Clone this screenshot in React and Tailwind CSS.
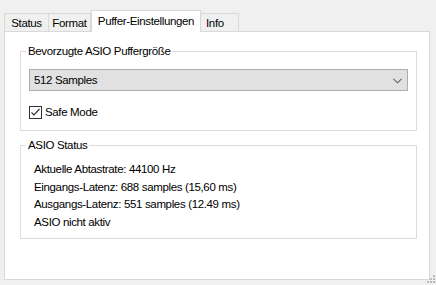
import React from "react";

const font = { fontFamily: '"Liberation Sans", Arial, sans-serif' };

export default function App() {
  return (
    <div
      className="relative h-[285px] w-[436px] overflow-hidden bg-[#f0f0f0] text-[11.5px] leading-[15px] tracking-[-0.35px] text-black"
      style={font}
    >
      <div className="flex flex-col pl-[4px] pr-[6px] pt-[10px]">
        <div className="flex h-[21px] items-end">
          <div className="flex h-[18px] w-[45px] items-start justify-center border border-b-0 border-[#d9d9d9] pt-[2px]">Status</div>
          <div className="flex h-[18px] w-[42px] items-start justify-center border border-b-0 border-l-0 border-[#d9d9d9] pt-[2px]">Format</div>
          <div className="relative z-10 -mb-px flex h-[22px] w-[110px] items-start justify-center border border-b-0 border-[#d9d9d9] bg-white pt-[3px]">Puffer-Einstellungen</div>
          <div className="flex h-[18px] w-[38px] items-start border border-b-0 border-l-0 border-[#d9d9d9] pl-[5px] pt-[2px]">Info</div>
        </div>
        <div className="flex h-[249px] flex-col border border-[#d9d9d9] bg-white pl-[15px] pr-[12px] pt-[12px]">
          <fieldset className="h-[87px] border border-[#dcdcdc] px-[8px] pt-[10px]">
            <legend className="-ml-[3px] px-[2px] leading-[15px]">Bevorzugte ASIO Puffergröße</legend>
            <div className="flex h-[22px] items-center justify-between border border-[#adadad] bg-[#e1e1e1] pl-[4px] pr-[5px]">
              <span>512 Samples</span>
              <svg width="9" height="6" viewBox="0 0 9 6" className="mt-[1px]">
                <path d="M0.5 0.8 L4.5 4.8 L8.5 0.8" fill="none" stroke="#606060" strokeWidth="1.1" />
              </svg>
            </div>
            <label className="mt-[14px] flex items-center gap-[3px]">
              <span className="flex h-[13px] w-[13px] items-center justify-center border border-[#333333] bg-white">
                <svg width="11" height="11" viewBox="0 0 11 11">
                  <path d="M1.5 5.5 L4 8 L9.5 2" fill="none" stroke="#333333" strokeWidth="1.2" />
                </svg>
              </span>
              <span>Safe Mode</span>
            </label>
          </fieldset>
          <fieldset className="mt-[7px] h-[101px] border border-[#dcdcdc] pl-[13px] pt-[9px]">
            <legend className="-ml-[8px] px-[2px] leading-[15px]">ASIO Status</legend>
            <div className="flex flex-col gap-[2.7px]">
              <div>Aktuelle Abtastrate: 44100 Hz</div>
              <div>Eingangs-Latenz: 688 samples (15,60 ms)</div>
              <div>Ausgangs-Latenz: 551 samples (12.49 ms)</div>
              <div>ASIO nicht aktiv</div>
            </div>
          </fieldset>
        </div>
      </div>
      <svg className="absolute bottom-[2px] right-[1px]" width="8" height="8" viewBox="0 0 8 8">
        <rect x="6" y="0" width="2" height="2" fill="#bcbcbc" />
        <rect x="6" y="3" width="2" height="2" fill="#bcbcbc" />
        <rect x="6" y="6" width="2" height="2" fill="#bcbcbc" />
        <rect x="3" y="3" width="2" height="2" fill="#bcbcbc" />
        <rect x="3" y="6" width="2" height="2" fill="#bcbcbc" />
        <rect x="0" y="6" width="2" height="2" fill="#bcbcbc" />
      </svg>
    </div>
  );
}
